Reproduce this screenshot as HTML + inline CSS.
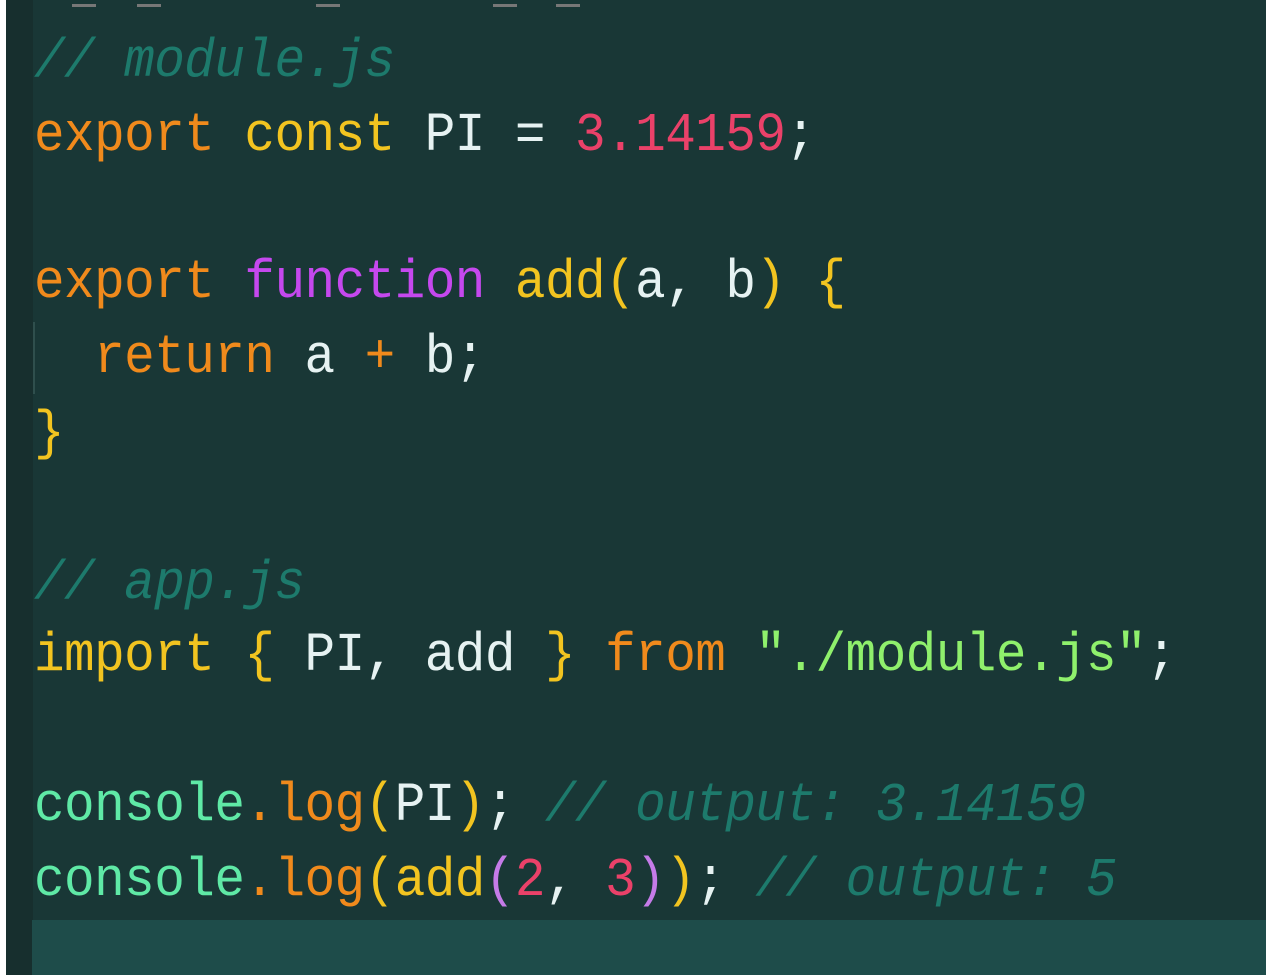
<!DOCTYPE html>
<html><head><style>
html,body{margin:0;padding:0;width:1266px;height:975px;overflow:hidden;background:#fff}
#ed{position:absolute;left:6px;top:0;width:1260px;height:975px;background:#193736}
#gut{position:absolute;left:6px;top:0;width:27px;height:975px;background:#172f2e}
#act{position:absolute;left:32px;top:920px;width:1234px;height:55px;background:#1e4c4a}
#guide{position:absolute;left:33px;top:322px;width:2px;height:72px;background:#2f4f4d}
.l{position:absolute;left:34px;height:75px;line-height:75px;font-family:"Liberation Mono",monospace;font-size:51px;white-space:pre;color:#e6f2f2;letter-spacing:-0.55px;transform:scaleY(1.08);transform-origin:0 50%}
.c{color:#1d7a6c;font-style:italic}
.o{color:#f08a1c}.y{color:#f2c420}.w{color:#e6f2f2}.p{color:#ea4169}.f{color:#c548ee}.g{color:#5fe9a6}.s{color:#8ff06c}.b{color:#c57be8}
#dash span{position:absolute;top:4px;height:3px;background:#777;width:24px}
</style></head><body>
<div id="ed"></div><div id="gut"></div><div id="act"></div><div id="guide"></div>
<div id="dash"><span style="left:72px"></span><span style="left:137px"></span><span style="left:316px"></span><span style="left:493px"></span><span style="left:556px"></span></div>
<div class="l" style="top:25px"><span class="c">// module.js</span></div>
<div class="l" style="top:99px"><span class="o">export</span> <span class="y">const</span> PI = <span class="p">3.14159</span>;</div>
<div class="l" style="top:246px"><span class="o">export</span> <span class="f">function</span> <span class="y">add</span><span class="y">(</span>a, b<span class="y">)</span> <span class="y">{</span></div>
<div class="l" style="top:321px">  <span class="o">return</span> a <span class="o">+</span> b;</div>
<div class="l" style="top:397px"><span class="y">}</span></div>
<div class="l" style="top:547px"><span class="c">// app.js</span></div>
<div class="l" style="top:619px"><span class="y">import</span> <span class="y">{</span> PI, add <span class="y">}</span> <span class="o">from</span> <span class="s">"./module.js"</span>;</div>
<div class="l" style="top:769px"><span class="g">console</span><span class="o">.log</span><span class="y">(</span>PI<span class="y">)</span>; <span class="c">// output: 3.14159</span></div>
<div class="l" style="top:844px"><span class="g">console</span><span class="o">.log</span><span class="y">(</span><span class="y">add</span><span class="b">(</span><span class="p">2</span>, <span class="p">3</span><span class="b">)</span><span class="y">)</span>; <span class="c">// output: 5</span></div>
</body></html>
